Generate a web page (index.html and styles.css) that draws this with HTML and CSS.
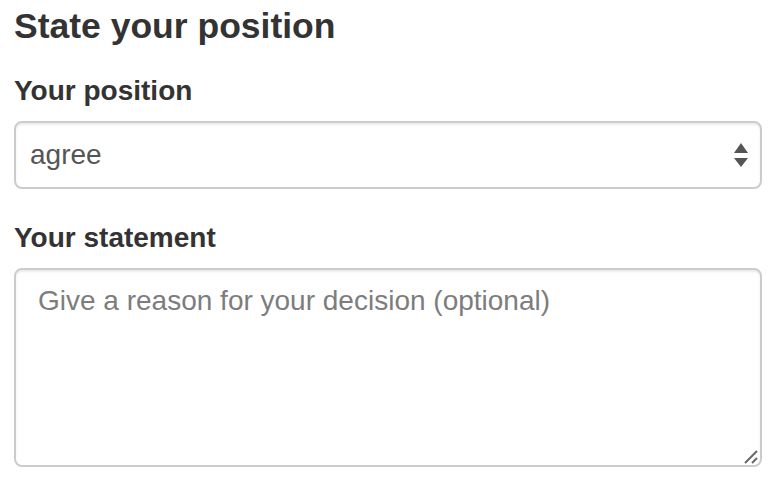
FILE: index.html
```html
<!DOCTYPE html>
<html lang="en">
<head>
<meta charset="utf-8">
<title>State your position</title>
<link rel="stylesheet" href="styles.css">
</head>
<body>
<form class="panel">
  <h3 class="title">State your position</h3>
  <div class="group group-first">
    <label class="label" for="position">Your position</label>
    <div class="field-wrap">
      <select id="position" class="control select">
        <option>agree</option>
        <option>disagree</option>
        <option>neutral</option>
      </select>
      <svg class="arrows" width="14" height="25" viewBox="0 0 14 25" aria-hidden="true">
        <polygon points="7,0 14,10 0,10" fill="#555"/>
        <polygon points="0,15 14,15 7,24" fill="#555"/>
      </svg>
    </div>
  </div>
  <div class="group group-second">
    <label class="label" for="statement">Your statement</label>
    <div class="field-wrap">
      <textarea id="statement" class="control area" placeholder="Give a reason for your decision (optional)"></textarea>
      <svg class="grip" width="14" height="14" viewBox="0 0 14 14" aria-hidden="true">
        <line x1="1" y1="13" x2="13" y2="1" stroke="#666" stroke-width="2"/>
        <line x1="8" y1="13" x2="13" y2="8" stroke="#666" stroke-width="2"/>
      </svg>
    </div>
  </div>
</form>
</body>
</html>
```
FILE: styles.css
```css
html, body {
  margin: 0;
  padding: 0;
  background: #fff;
}
body {
  font-family: "Liberation Sans", Arial, Helvetica, sans-serif;
  color: #333;
}
.panel {
  display: flex;
  flex-direction: column;
  padding: 0 22px 0 14px;
}
.title {
  margin: 0;
  font-size: 35.5px;
  line-height: 53px;
  font-weight: 700;
  color: #333;
}
.group {
  display: flex;
  flex-direction: column;
}
.group-first {
  margin-top: 17.5px;
}
.group-second {
  margin-top: 29.5px;
}
.label {
  display: block;
  font-size: 28px;
  line-height: 40px;
  font-weight: 700;
  color: #333;
  margin-bottom: 10px;
}
.control {
  box-sizing: border-box;
  display: block;
  width: 100%;
  margin: 0;
  font-family: "Liberation Sans", Arial, Helvetica, sans-serif;
  font-size: 28px;
  color: #555;
  background: #fff;
  border: 2px solid #ccc;
  border-radius: 8px;
  box-shadow: inset 0 2px 2px rgba(0, 0, 0, 0.075);
  outline: none;
}
.field-wrap {
  position: relative;
}
.select {
  -webkit-appearance: none;
  appearance: none;
  height: 68px;
  padding: 0 40px 0 14px;
  line-height: 40px;
}
.arrows {
  position: absolute;
  right: 14px;
  top: 22px;
  pointer-events: none;
}
.area {
  height: 199px;
  padding: 11px 22px;
  line-height: 40px;
  resize: none;
}
.area::placeholder {
  color: #7d7d7d;
  opacity: 1;
}
.grip {
  position: absolute;
  right: 4px;
  bottom: 3px;
  pointer-events: none;
}
```
